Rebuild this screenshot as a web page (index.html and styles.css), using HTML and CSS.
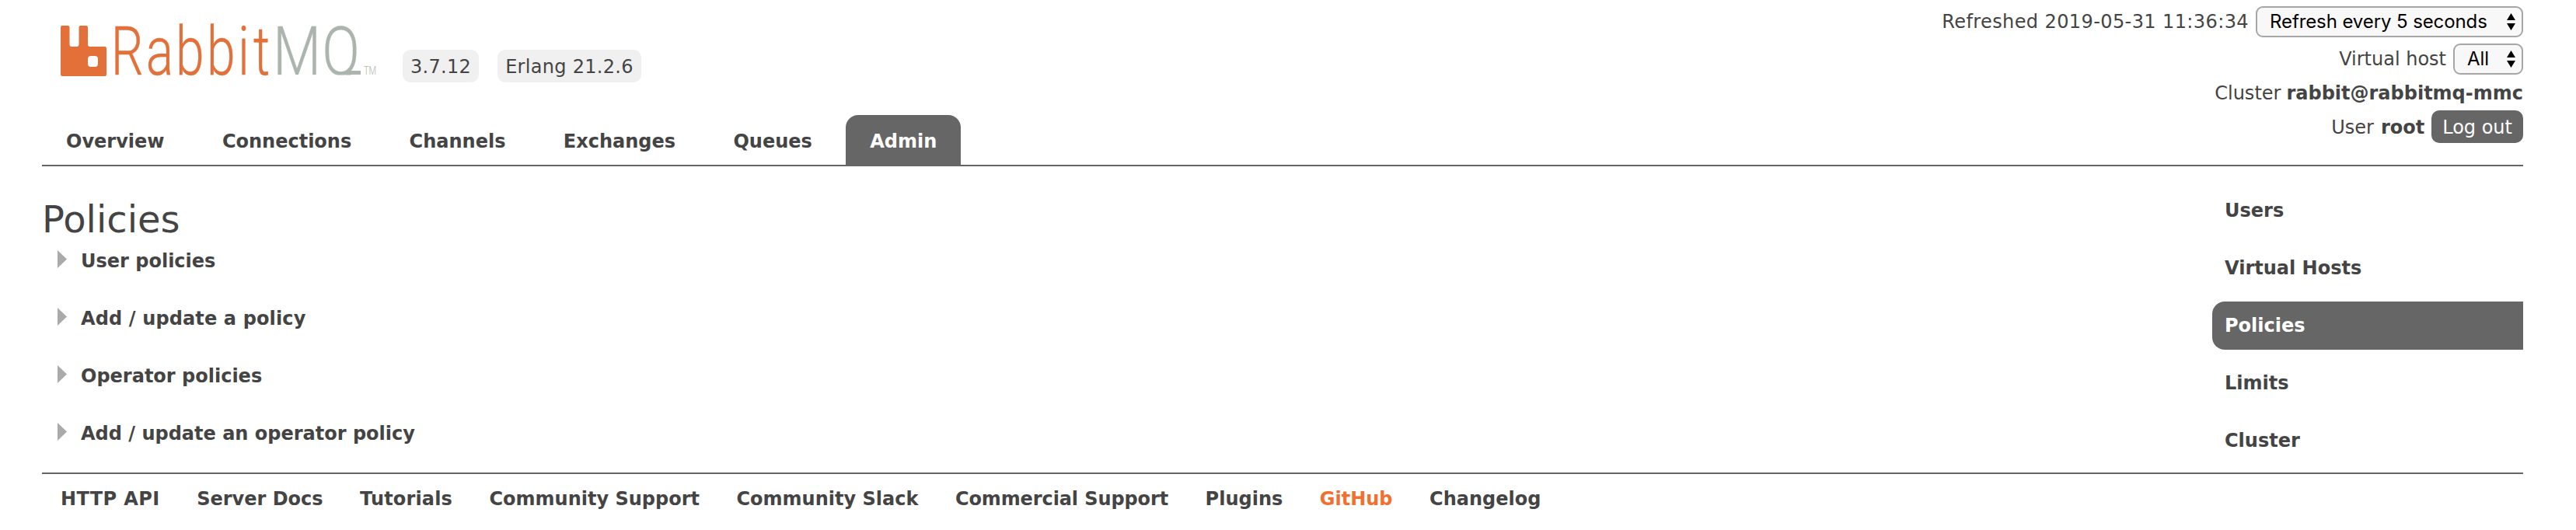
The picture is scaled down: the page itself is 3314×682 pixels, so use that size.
FILE: index.html
```html
<!DOCTYPE html>
<html lang="en">
<head>
<meta charset="utf-8">
<title>RabbitMQ Management</title>
<link rel="stylesheet" href="styles.css">
</head>
<body>
<header class="header">
  <div class="masthead">
    <div class="brand">
      <svg class="logo" viewBox="0 -29 412 130" role="img" aria-label="RabbitMQ">
        <clipPath id="above-baseline"><rect x="270" y="-29" width="142" height="96.5"/></clipPath>
        <path class="mark" fill-rule="evenodd" d="M0 6q0-2 2-2h7q2.500 0 2.500 2v22q0 3 3 3h6q3 0 3-3v-22q0-2 2-2h7q2.500 0 2.500 2v22q0 3 3 3h19q2 0 2 2v34q0 2-2 2h-55q-2 0-2-2zM39 43q-4 0-4 4v6q0 4 4 4h5q4 0 4-4v-6q0-4-4-4z"/>
        <text class="word rabbit" transform="translate(0 67) scale(.75 .98)" x="86.300 146.300 197.400 250.700 304 330.700">Rabbit</text>
        <g clip-path="url(#above-baseline)">
          <text class="word mq" transform="translate(0 67) scale(.81 1)" x="337.400 415.400">MQ</text>
        </g>
        <path class="tail" d="M366 64.500h20"/>
        <text class="tm" x="390" y="67" textLength="16" lengthAdjust="spacingAndGlyphs">TM</text>
      </svg>
      <span class="version">3.7.12</span>
      <span class="version erlang">Erlang 21.2.6</span>
    </div>
    <nav class="tabs">
      <a class="tab">Overview</a>
      <a class="tab">Connections</a>
      <a class="tab">Channels</a>
      <a class="tab">Exchanges</a>
      <a class="tab">Queues</a>
      <a class="tab selected">Admin</a>
    </nav>
  </div>
  <div class="status">
    <div class="status-row select-row">
      <span class="refreshed">Refreshed 2019-05-31 11:36:34</span>
      <span class="select refresh">Refresh every 5 seconds<svg class="arrows" viewBox="0 0 11 22"><path d="M0 9L5.500 0 11 9zM0 13h11l-5.500 9z"/></svg></span>
    </div>
    <div class="status-row select-row">
      <span>Virtual host</span>
      <span class="select all">All<svg class="arrows" viewBox="0 0 11 22"><path d="M0 9L5.500 0 11 9zM0 13h11l-5.500 9z"/></svg></span>
    </div>
    <div class="status-row cluster"><span>Cluster</span><b>rabbit@rabbitmq-mmc</b></div>
    <div class="status-row user"><span class="who">User</span><b class="who">root</b><span class="logout">Log out</span></div>
  </div>
</header>
<div class="content">
  <main class="main">
    <h1 class="title">Policies</h1>
    <h2 class="section"><i class="caret"></i>User policies</h2>
    <h2 class="section wide"><i class="caret"></i>Add / update a policy</h2>
    <h2 class="section"><i class="caret"></i>Operator policies</h2>
    <h2 class="section"><i class="caret"></i>Add / update an operator policy</h2>
  </main>
  <nav class="side">
    <a class="side-link">Users</a>
    <a class="side-link">Virtual Hosts</a>
    <a class="side-link selected">Policies</a>
    <a class="side-link">Limits</a>
    <a class="side-link">Cluster</a>
  </nav>
</div>
<footer class="footer">
  <a class="api">HTTP API</a>
  <a>Server Docs</a>
  <a class="tutorials">Tutorials</a>
  <a>Community Support</a>
  <a>Community Slack</a>
  <a class="commercial">Commercial Support</a>
  <a>Plugins</a>
  <a class="github">GitHub</a>
  <a>Changelog</a>
</footer>
</body>
</html>
```
FILE: styles.css
```css
body {
  margin: 0;
  background: #fff;
  color: #444;
  font: 24px/28px "DejaVu Sans", Verdana, sans-serif;
}
.header {
  display: flex;
  justify-content: space-between;
  height: 212px;
  margin: 0 68px 0 54px;
  border-bottom: 2px solid #666;
}
.masthead {
  display: flex;
  flex-direction: column;
  justify-content: space-between;
}
.brand {
  display: flex;
  align-items: flex-start;
  padding-left: 24px;
}
.logo { width: 412px; height: 130px; overflow: visible; }
.mark, .rabbit { fill: #e37039; }
.word { font: 300 88px Roboto, sans-serif; stroke-width: .4px; }
.rabbit { stroke: #e37039; }
.mq { fill: #abb4ad; stroke: #abb4ad; }
.tail { fill: none; stroke: #abb4ad; stroke-width: 5px; }
.tm { font: 300 14px Roboto, sans-serif; fill: #abb4ad; }
.version {
  margin: 64px 0 0 28px;
  padding: 8px 10px 6px;
  border-radius: 10px;
  background: #f0f0f0;
  letter-spacing: .3px;
}
.erlang { margin-left: 24px; }
.tabs { display: flex; gap: 12.4px; }
.tab {
  padding: 20px 31px 16px;
  border-radius: 16px 16px 0 0;
  font-weight: bold;
}
.selected { background: #666; color: #fff; }
.status { display: flex; flex-direction: column; }
.status-row {
  display: flex;
  justify-content: flex-end;
  align-items: center;
  gap: 9px;
}
.select-row { height: 40px; margin-top: 8px; }
.refreshed { letter-spacing: .4px; }
.cluster { margin-top: 10px; height: 28px; gap: 7px; }
.user { margin-top: 8px; height: 42px; }
.who { padding-top: 2px; }
.select {
  box-sizing: border-box;
  display: flex;
  justify-content: space-between;
  align-items: center;
  height: 40px;
  padding: 0 8px 0 16px;
  border: 2px solid #a6a6a6;
  border-radius: 9px;
  background: #f8f8f8;
  color: #000;
  font-family: Inter, sans-serif;
}
.refresh { width: 344px; letter-spacing: -.1px; }
.all { width: 90px; }
.arrows { width: 11px; height: 22px; }
.logout {
  padding: 8px 14px 6px;
  border-radius: 10px;
  background: #666;
  color: #fff;
}
.content {
  display: flex;
  justify-content: space-between;
  height: 394px;
  margin: 0 68px 0 54px;
  border-bottom: 2px solid #666;
}
.title {
  margin: 40px 0 12px;
  font-size: 48px;
  line-height: 56px;
  font-weight: normal;
}
.section {
  display: flex;
  align-items: flex-start;
  height: 28px;
  margin: 0 0 46px;
  padding-left: 20px;
  font-size: 24px;
}
.wide { letter-spacing: .13px; }
.caret {
  width: 12px;
  height: 23px;
  margin-right: 18px;
  background: #aaa;
  clip-path: polygon(0 0, 100% 50%, 0 100%);
}
.side {
  display: flex;
  flex-direction: column;
  gap: 12px;
  width: 400px;
  padding-top: 26px;
}
.side-link {
  padding: 17px 16px;
  border-radius: 16px 0 0 16px;
  font-weight: bold;
}
.footer {
  display: flex;
  gap: 47.5px;
  padding: 18px 0 0 78px;
  font-weight: bold;
}
.api { letter-spacing: .4px; }
.tutorials { letter-spacing: .15px; }
.commercial { letter-spacing: -.1px; }
.github { color: #f07030; }
```
